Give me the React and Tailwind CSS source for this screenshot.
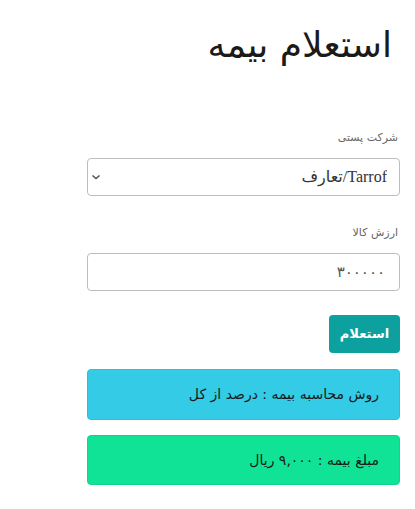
export default function App() {
  return (
    <div dir="rtl" className="min-h-[509px] bg-white pl-[15px] pr-[15px]" style={{ fontFamily: '"DejaVu Sans", sans-serif' }}>
      <div className="mr-0 ml-auto w-[313px]">
        <h1 className="pt-[19px] pr-[8px] text-[36px] leading-[52px] text-[#1a1a1a]">استعلام بیمه</h1>

        <div className="mt-[59px]">
          <label className="block pr-[2px] text-[11px] leading-[16px] text-[#666]">شرکت پستی</label>
          <div className="relative mt-[12px]">
            <select className="h-[38px] w-full appearance-none rounded-[4px] border border-[#bdbdbd] bg-white pr-[12px] pl-[24px] text-[16px] text-[#333]" style={{ fontFamily: '"Liberation Serif", "DejaVu Sans", serif' }}>
              <option>Tarrof/تعارف</option>
            </select>
            <svg className="pointer-events-none absolute top-[15px] left-[4px]" width="10" height="8" viewBox="0 0 10 8">
              <path d="M1.5 2.5 L5 5.5 L8.5 2.5" fill="none" stroke="#555" strokeWidth="1.6" />
            </svg>
          </div>
        </div>

        <div className="mt-[29px]">
          <label className="block pr-[2px] text-[11px] leading-[16px] text-[#666]">ارزش کالا</label>
          <input className="mt-[12px] h-[38px] w-full rounded-[4px] border border-[#bdbdbd] bg-white pr-[14px] text-[15px] text-[#555]" defaultValue="۳۰۰۰۰۰" />
        </div>

        <div className="mt-[24px] flex">
          <button className="h-[38px] w-[71px] rounded-[4px] bg-[#0ca19e] text-[13px] font-bold text-white">استعلام</button>
        </div>

        <div className="mt-[16px] flex h-[51px] items-center rounded-[4px] border border-[#2bbfd9] bg-[#33cbe6] pr-[20px] text-[14px] text-[#1a1a1a]">
          روش محاسبه بیمه : درصد از کل
        </div>

        <div className="mt-[15px] flex h-[50px] items-center rounded-[4px] border border-[#0fd68d] bg-[#10e396] pr-[20px] text-[14px] text-[#1a1a1a]">
          مبلغ بیمه : ۹,۰۰۰ ریال
        </div>
      </div>
    </div>
  )
}
